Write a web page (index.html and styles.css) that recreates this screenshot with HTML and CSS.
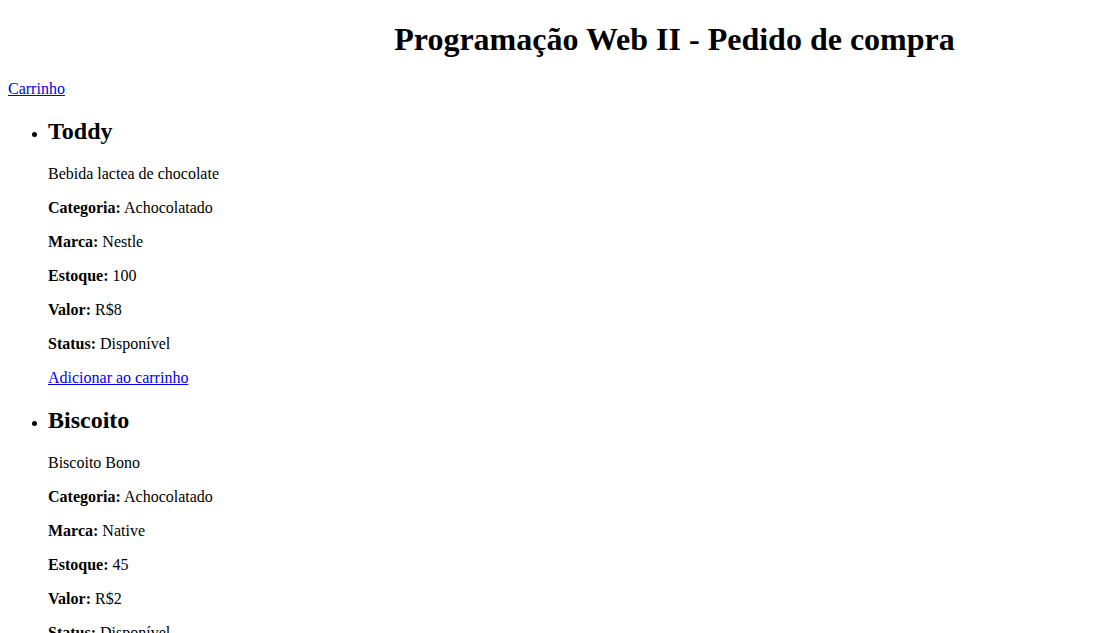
FILE: index.html
```html
<!DOCTYPE html>
<html lang="pt-BR">
<head>
<meta charset="utf-8">
<title>Pedido de compra</title>
<link rel="stylesheet" href="styles.css">
</head>
<body>
<h1 class="title">Programação Web II - Pedido de compra</h1>
<a class="link" href="#">Carrinho</a>
<ul class="products">
  <li>
    <h2>Toddy</h2>
    <p>Bebida lactea de chocolate</p>
    <p><b>Categoria:</b> Achocolatado</p>
    <p><b>Marca:</b> Nestle</p>
    <p><b>Estoque:</b> 100</p>
    <p><b>Valor:</b> R$8</p>
    <p><b>Status:</b> Disponível</p>
    <a class="link" href="#">Adicionar ao carrinho</a>
  </li>
  <li>
    <h2>Biscoito</h2>
    <p>Biscoito Bono</p>
    <p><b>Categoria:</b> Achocolatado</p>
    <p><b>Marca:</b> Native</p>
    <p><b>Estoque:</b> 45</p>
    <p><b>Valor:</b> R$2</p>
    <p><b>Status:</b> Disponível</p>
    <a class="link" href="#">Adicionar ao carrinho</a>
  </li>
</ul>
</body>
</html>
```
FILE: styles.css
```css
html, body {
  font-family: "Liberation Serif", "Times New Roman", serif;
  font-size: 16px;
  color: #000;
  background: #fff;
}
body {
  margin: 8px;
}
.title {
  font-size: 32px;
  font-weight: bold;
  text-align: center;
  padding-left: 254px;
  margin: 13.44px 0 21.44px;
}
.link {
  color: #0000ee;
  text-decoration: underline;
}
.products {
  margin: 16px 0;
  padding-left: 40px;
}
.products h2 {
  font-size: 24px;
  margin: 19.92px 0;
}
.products p {
  margin: 16px 0;
}
```
